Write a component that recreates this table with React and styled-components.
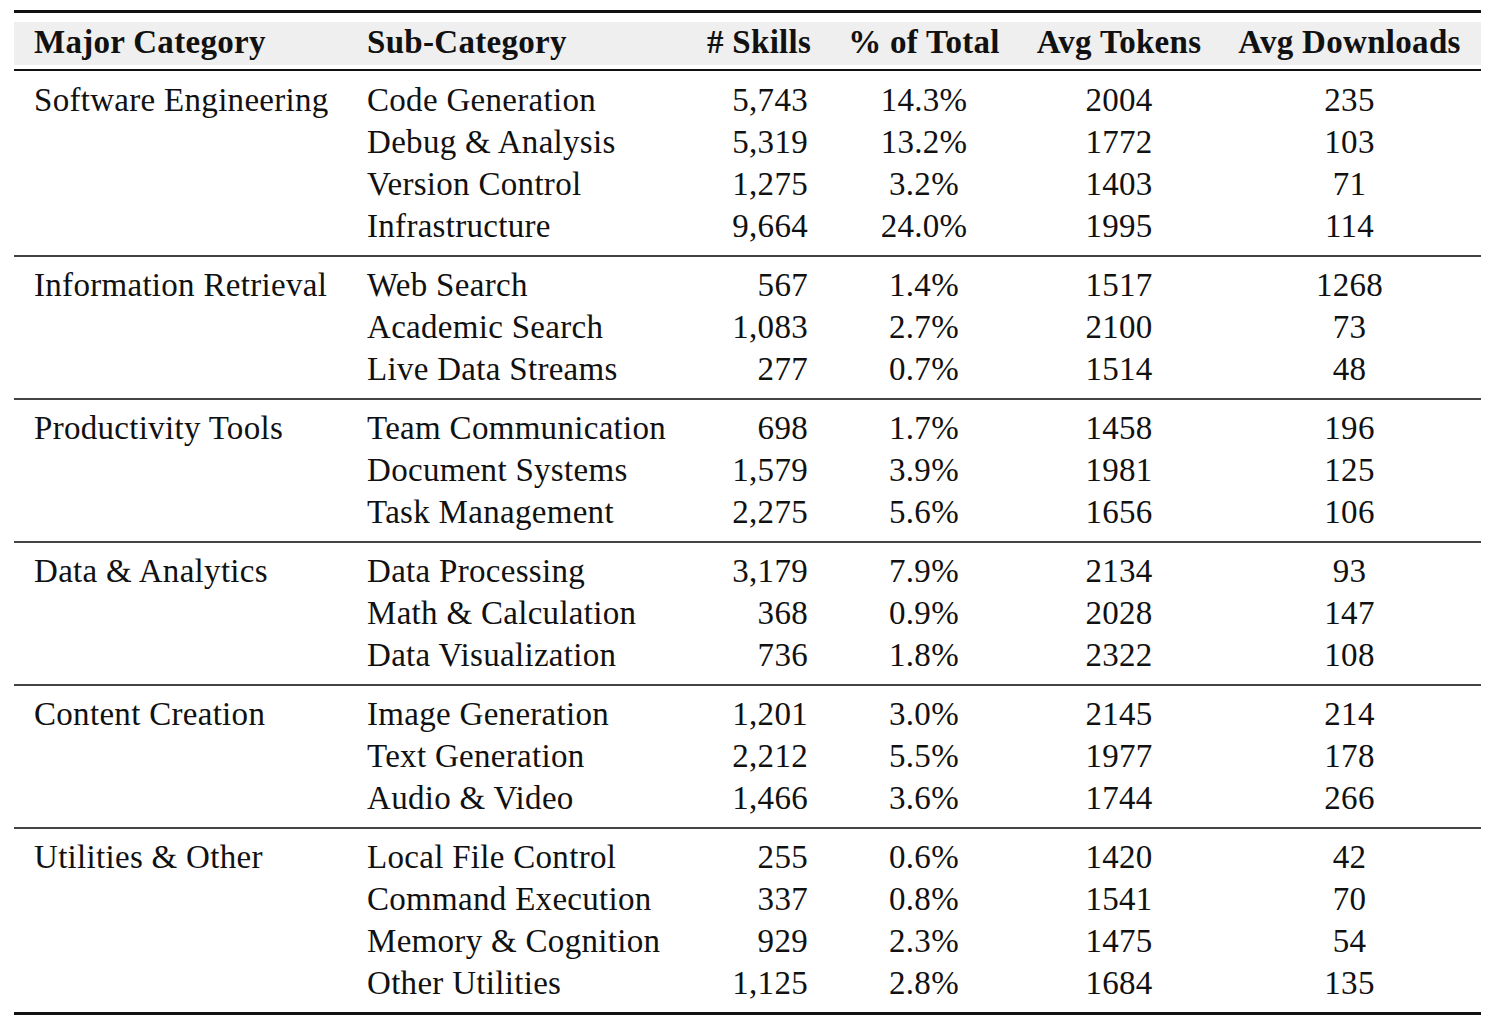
import React from 'react';
import styled, { createGlobalStyle } from 'styled-components';

const GlobalStyle = createGlobalStyle`
  html, body {
    margin: 0;
    padding: 0;
    background: #ffffff;
  }
  body {
    font-family: "Liberation Serif", "Times New Roman", serif;
    color: #111111;
  }
`;

const Page = styled.div`
  width: 1490px;
  padding: 10px 0 0 14px;
  box-sizing: border-box;
`;

const Frame = styled.div`
  width: 1467px;
  border-top: 3px solid #111;
  border-bottom: 3px solid #111;
  padding-top: 9px;
`;

const Table = styled.table`
  width: 100%;
  border-collapse: separate;
  border-spacing: 0;
  table-layout: fixed;
  font-size: 33px;
  letter-spacing: 0.3px;
`;

const HeadCell = styled.th`
  font-weight: 700;
  height: 49px;
  box-sizing: border-box;
  padding: 0 ${p => (p.$pad ? '20px' : '0')} 6px;
  text-align: ${p => p.$align || 'center'};
  vertical-align: middle;
  background: #efefef;
  border-bottom: 2px solid #111;
  box-shadow: inset 0 -4px 0 #fff;
  white-space: nowrap;
  line-height: 41px;
`;

const Group = styled.tbody`
  & > tr:first-child > td {
    padding-top: 8px;
  }
  & + & > tr:first-child > td {
    border-top: 2px solid #444;
    padding-top: 7px;
  }
  & > tr:last-child > td {
    padding-bottom: 8px;
  }
`;

const Cell = styled.td`
  height: 42px;
  padding: 0 ${p => (p.$pad ? '20px' : '0')};
  text-align: ${p => p.$align || 'center'};
  vertical-align: middle;
  white-space: nowrap;
  line-height: 42px;
`;

const columns = [
  { label: 'Major Category', width: 333, align: 'left', pad: true },
  { label: 'Sub-Category', width: 340, align: 'left', pad: true },
  { label: '# Skills', width: 141, align: 'right', pad: true },
  { label: '% of Total', width: 192 },
  { label: 'Avg Tokens', width: 198 },
  { label: 'Avg Downloads', width: 263 },
];

const groups = [
  {
    name: 'Software Engineering',
    rows: [
      ['Code Generation', '5,743', '14.3%', '2004', '235'],
      ['Debug & Analysis', '5,319', '13.2%', '1772', '103'],
      ['Version Control', '1,275', '3.2%', '1403', '71'],
      ['Infrastructure', '9,664', '24.0%', '1995', '114'],
    ],
  },
  {
    name: 'Information Retrieval',
    rows: [
      ['Web Search', '567', '1.4%', '1517', '1268'],
      ['Academic Search', '1,083', '2.7%', '2100', '73'],
      ['Live Data Streams', '277', '0.7%', '1514', '48'],
    ],
  },
  {
    name: 'Productivity Tools',
    rows: [
      ['Team Communication', '698', '1.7%', '1458', '196'],
      ['Document Systems', '1,579', '3.9%', '1981', '125'],
      ['Task Management', '2,275', '5.6%', '1656', '106'],
    ],
  },
  {
    name: 'Data & Analytics',
    rows: [
      ['Data Processing', '3,179', '7.9%', '2134', '93'],
      ['Math & Calculation', '368', '0.9%', '2028', '147'],
      ['Data Visualization', '736', '1.8%', '2322', '108'],
    ],
  },
  {
    name: 'Content Creation',
    rows: [
      ['Image Generation', '1,201', '3.0%', '2145', '214'],
      ['Text Generation', '2,212', '5.5%', '1977', '178'],
      ['Audio & Video', '1,466', '3.6%', '1744', '266'],
    ],
  },
  {
    name: 'Utilities & Other',
    rows: [
      ['Local File Control', '255', '0.6%', '1420', '42'],
      ['Command Execution', '337', '0.8%', '1541', '70'],
      ['Memory & Cognition', '929', '2.3%', '1475', '54'],
      ['Other Utilities', '1,125', '2.8%', '1684', '135'],
    ],
  },
];

const App = () => {
  return (
    <Page>
      <GlobalStyle />
      <Frame>
        <Table>
          <colgroup>
            {columns.map(c => (
              <col key={c.label} style={{ width: c.width }} />
            ))}
          </colgroup>
          <thead>
            <tr>
              {columns.map(c => (
                <HeadCell key={c.label} $align={c.align} $pad={c.pad}>
                  {c.label}
                </HeadCell>
              ))}
            </tr>
          </thead>
          {groups.map(g => (
            <Group key={g.name}>
              {g.rows.map((r, i) => (
                <tr key={r[0]}>
                  <Cell $align="left" $pad>{i === 0 ? g.name : ''}</Cell>
                  <Cell $align="left" $pad>{r[0]}</Cell>
                  <Cell $align="right" $pad>{r[1]}</Cell>
                  <Cell>{r[2]}</Cell>
                  <Cell>{r[3]}</Cell>
                  <Cell>{r[4]}</Cell>
                </tr>
              ))}
            </Group>
          ))}
        </Table>
      </Frame>
    </Page>
  );
};

export default App;
